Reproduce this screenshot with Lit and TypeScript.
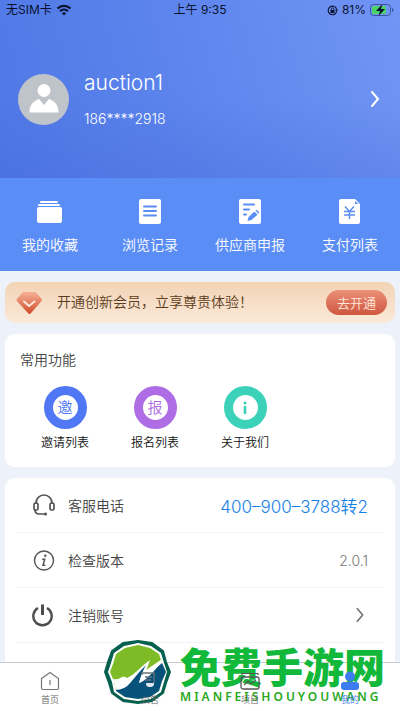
import { LitElement, html, svg, css } from "lit";
import { customElement } from "lit/decorators.js";

const quick = [
  {
    label: "我的收藏",
    icon: svg`<rect x="4" y="4" width="18" height="2" rx="1" fill="#fff"/><rect x="2" y="7" width="22" height="2" rx="1" fill="#fff"/><rect x="1" y="10" width="25" height="16" rx="2" fill="#fff"/>`,
  },
  {
    label: "浏览记录",
    icon: svg`<rect x="3" y="2" width="22" height="25" rx="2" fill="#fff"/><path d="M8 9.500H20M8 14H20M8 18.500H20" stroke="#5b8df6" stroke-width="2" stroke-linecap="round"/>`,
  },
  {
    label: "供应商申报",
    icon: svg`<rect x="3" y="2" width="22" height="25" rx="2" fill="#fff"/><path d="M8 7.500H18M8 12.500H13M8 17.500H10" stroke="#5b8df6" stroke-width="2" stroke-linecap="round"/><path d="M11.500 24L12.500 20L18.500 14.500L21.500 17.800L15.500 23Z" fill="#5b8df6"/><path d="M19.500 13.600L20.700 12.800L23.300 15.600L22.400 16.800Z" fill="#5b8df6"/>`,
  },
  {
    label: "支付列表",
    icon: svg`<path d="M5 2H19L24 7V25a2 2 0 0 1-2 2H5a2 2 0 0 1-2-2V4a2 2 0 0 1 2-2Z" fill="#fff"/><path d="M19 4V7H22.500Z" fill="#5b8df6"/><path d="M9 9.500L13.500 14.500L18 9.500M8 14.500H19M8 18H19M13.500 14.500V22" fill="none" stroke="#5b8df6" stroke-width="1.500"/>`,
  },
];

const headset = svg`<g fill="none" stroke="#555" stroke-width="1.700"><path d="M4 11V10a8 8 0 0 1 16 0v1"/><rect x="2" y="10" width="4" height="7" rx="1.500"/><rect x="18" y="10" width="4" height="7" rx="1.500"/><path d="M3 16.500c0 3 1.500 4.500 4 4.500H12"/></g><circle cx="13.500" cy="21" r="1.600" fill="#555"/>`;
const info = svg`<circle cx="12" cy="12.500" r="9.500" fill="none" stroke="#555" stroke-width="1.400"/><circle cx="13.300" cy="7.800" r="1.200" fill="#555"/><path d="M10.200 11.200H12.700L11 17.300H13.300" fill="none" stroke="#555" stroke-width="1.500"/>`;
const power = svg`<path d="M6 5a9.200 9.200 0 1 0 9 0" fill="none" stroke="#4d4d4d" stroke-width="2.400"/><path d="M10.500 1.500V12" stroke="#4d4d4d" stroke-width="3"/>`;
const phone = svg`<path d="M6 22V9a3 3 0 0 1 5 0" fill="none" stroke="#4d4d4d" stroke-width="2"/>`;

const tabs = [
  {
    label: "首页",
    icon: svg`<path d="M1.500 7.500L10 1.500L18.500 7.500V17a1.500 1.500 0 0 1-1.500 1.500H3A1.500 1.500 0 0 1 1.500 17ZM10 9V14" fill="none" stroke="#777" stroke-width="1.200"/>`,
  },
  {
    label: "公告",
    icon: svg`<path d="M2 4V2H14V12M5 6H12M5 9H11" fill="none" stroke="#69717a" stroke-width="1.300"/><path d="M6 12H14c0 3-1 4-4 4s-4-1-4-4Z" fill="#dfe8ee"/>`,
  },
  {
    label: "项目",
    icon: svg`<rect x="1" y="6" width="18" height="12" rx="2" fill="none" stroke="#555" stroke-width="1.300"/><path d="M2 4V2.500H18V4M4 14L8 10L11 13L16 9" fill="none" stroke="#555" stroke-width="1.200"/>`,
  },
  {
    label: "我的",
    active: true,
    icon: svg`<circle cx="10" cy="5.500" r="5" fill="#3c7cf0"/><rect x="1" y="11" width="18" height="8" rx="3" fill="#3c7cf0"/>`,
  },
];

@customElement("app-root")
export class AppRoot extends LitElement {
  static styles = css`
    :host {
      display: flex;
      flex-direction: column;
      height: 100vh;
      background: #edf2fa;
      font-family: Inter, "Noto Sans CJK SC", sans-serif;
      font-weight: 350;
      color: #333;
      overflow: hidden;
    }
    * { box-sizing: border-box; }
    svg { display: block; flex: none; }
    button {
      border: 0;
      padding: 0;
      margin: 0;
      background: none;
      font: inherit;
      color: inherit;
    }
    a { color: inherit; text-decoration: none; }
    .hero {
      flex: none;
      background:
        linear-gradient(180deg, rgba(64, 98, 210, 0) 55%, rgba(64, 98, 210, 0.25) 100%),
        linear-gradient(75deg, #4f78e6 0%, #5c84ec 45%, #7195f5 100%);
    }
    .status {
      display: grid;
      grid-template-columns: 1fr auto 1fr;
      align-items: center;
      height: 20px;
      padding: 0 6px;
      font-size: 12px;
      line-height: 20px;
      font-weight: 400;
      color: #0b1230;
    }
    .status-side { display: flex; align-items: center; gap: 4px; }
    .end { justify-content: flex-end; }
    .profile {
      display: flex;
      align-items: center;
      width: 100%;
      height: 158px;
      padding: 0 16px 0 18px;
      gap: 15px;
      text-align: left;
      color: #fff;
    }
    .who { flex: 1; display: flex; flex-direction: column; gap: 12px; font-weight: 300; }
    .name { font-size: 21px; line-height: 28px; }
    .tel { font-size: 14px; line-height: 20px; }
    .quick {
      flex: none;
      display: grid;
      grid-template-columns: repeat(4, 1fr);
      background: #5b8df6;
      color: #fff;
      height: 93px;
    }
    .quick button {
      display: flex;
      flex-direction: column;
      align-items: center;
      padding-top: 19px;
      gap: 8px;
      font-size: 14px;
      line-height: 24px;
    }
    .scroll {
      flex: 1;
      min-height: 0;
      overflow: hidden;
      padding: 11px 5px 0;
      display: flex;
      flex-direction: column;
      gap: 11px;
    }
    .banner {
      flex: none;
      display: flex;
      align-items: center;
      height: 41px;
      padding: 0 8px 0 10px;
      border-radius: 10px;
      background: linear-gradient(180deg, #f3d3b4, #fbe9da);
      color: #5a3b20;
      font-size: 14px;
      line-height: 24px;
    }
    .banner-text { flex: 1; padding: 0 0 2px 4px; }
    .open {
      width: 61px;
      height: 25px;
      border-radius: 13px;
      background: linear-gradient(180deg, #ec9079, #cf5640);
      color: #ffeada;
      font-size: 13px;
      line-height: 24px;
      white-space: nowrap;
    }
    .card { flex: none; background: #fff; border-radius: 10px; }
    .common { height: 133px; padding: 14px 15px 0; }
    .title { margin: 0; font-size: 14px; line-height: 24px; font-weight: 350; color: #444; }
    .apps { display: flex; padding-top: 14px; }
    .app {
      width: 90px;
      display: flex;
      flex-direction: column;
      align-items: center;
      gap: 3px;
      font-size: 12px;
      line-height: 21px;
      color: #111;
    }
    .disc {
      display: grid;
      place-items: center;
      width: 43px;
      height: 43px;
      border: 9px solid currentColor;
      border-radius: 50%;
      font-size: 15px;
      line-height: 24px;
    }
    .blue { color: #5078f5; }
    .purple { color: #ae6ce5; }
    .teal { color: #3bd2b9; }
    .list { padding: 0 11px; }
    .row {
      display: flex;
      align-items: center;
      width: 100%;
      height: 55px;
      padding: 0 16px;
      gap: 12px;
      border-bottom: 1px solid #f2f3f5;
      font-size: 14px;
      text-align: left;
      color: #444;
    }
    .label { flex: 1; }
    .call { font-size: 17px; color: #1681e8; }
    .version { font-size: 14px; font-weight: 300; color: #777; }
    .tabbar {
      flex: none;
      position: relative;
      display: grid;
      grid-template-columns: repeat(4, 1fr);
      height: 49px;
      border-top: 1px solid #c9cbd2;
      background: #fff;
    }
    .tab {
      position: relative;
      display: flex;
      flex-direction: column;
      align-items: center;
      padding-top: 8px;
      gap: 2px;
      font-size: 9px;
      line-height: 14px;
      color: #666;
    }
    .active { color: #3c7cf0; }
    .mark {
      position: absolute;
      left: 104px;
      bottom: 7px;
      display: flex;
      align-items: flex-end;
      gap: 9px;
      pointer-events: none;
    }
    .mark-text { display: flex; flex-direction: column; color: #12b83a; white-space: nowrap; }
    .mark-cn {
      font-family: "Noto Sans CJK SC", sans-serif;
      font-size: 41px;
      line-height: 50px;
      font-weight: 900;
    }
    .mark-en {
      font-family: "Noto Sans", sans-serif;
      font-size: 12px;
      line-height: 14px;
      font-weight: 600;
      letter-spacing: 3px;
      color: #28a822;
    }
  `;

  private chevron(color: string, size: number, stroke: number) {
    return html`<svg width=${size} height=${size} viewBox="0 0 18 18" aria-hidden="true">
      <path d="M6 2L12 9L6 16" fill="none" stroke=${color} stroke-width=${stroke} stroke-linecap="round" stroke-linejoin="round" />
    </svg>`;
  }

  private rowIcon(icon: unknown) {
    return html`<svg width="24" height="24" viewBox="0 0 24 24" aria-hidden="true">${icon}</svg>`;
  }

  render() {
    return html`
      <header class="hero">
        <div class="status">
          <div class="status-side">
            <span>无SIM卡</span>
            <svg width="16" height="12" viewBox="0 0 16 12">
              <path d="M1.500 4.500a9.500 9.500 0 0 1 13 0M4 7.200a6 6 0 0 1 8 0" fill="none" stroke="#0b1230" stroke-width="2.200" />
              <path d="M5.800 9.300a3.300 3.300 0 0 1 4.400 0L8 11.500Z" fill="#0b1230" />
            </svg>
          </div>
          <span>上午 9:35</span>
          <div class="status-side end">
            <svg width="11" height="11" viewBox="0 0 11 11">
              <path d="M9.500 7a4.300 4.300 0 1 1 .2-2.500" fill="none" stroke="#0b1230" stroke-width="1.100" />
              <path d="M8 4.500h3l-1.500 2.500Z" fill="#0b1230" />
              <rect x="3.500" y="5" width="4" height="3" fill="#0b1230" />
              <path d="M4.300 5V4a1.200 1.200 0 0 1 2.400 0v1" fill="none" stroke="#0b1230" stroke-width=".8" />
            </svg>
            <span>81%</span>
            <svg width="24" height="12" viewBox="0 0 24 12">
              <rect x=".5" y=".5" width="20" height="11" rx="3" fill="none" stroke="#3c559f" />
              <rect x="2" y="2" width="14" height="8" rx="1.500" fill="#4bd264" />
              <path d="M22 4v4c1-.4 1.400-1 1.400-2S23 4.400 22 4Z" fill="#3c559f" />
              <path d="M12.500 0L6 7h4L8.500 12L15 5h-4Z" fill="#0b1230" />
            </svg>
          </div>
        </div>
        <button class="profile">
          <svg width="51" height="51" viewBox="0 0 51 51" aria-hidden="true">
            <circle cx="25.500" cy="25.500" r="25.500" fill="#bfc3ca" />
            <circle cx="26" cy="16.500" r="6.500" fill="#fff" />
            <path d="M11.500 38.500c0-7 3-11 9.500-13.500l5 6l5-6c6.500 2.500 9.500 6.500 9.500 13.500Z" fill="#fff" />
          </svg>
          <span class="who"><span class="name">auction1</span><span class="tel">186****2918</span></span>
          ${this.chevron("#fff", 18, 2)}
        </button>
      </header>

      <nav class="quick">
        ${quick.map(
          (q) => html`<button>
            <svg width="28" height="28" viewBox="0 0 28 28" aria-hidden="true">${q.icon}</svg>
            <span>${q.label}</span>
          </button>`
        )}
      </nav>

      <main class="scroll">
        <section class="banner">
          <svg width="38" height="30" viewBox="0 0 38 30" aria-hidden="true">
            <defs>
              <linearGradient id="gem" x1="0" y1="0" x2="0" y2="1">
                <stop offset="0" stop-color="#f4ab92" />
                <stop offset="1" stop-color="#d2512f" />
              </linearGradient>
            </defs>
            <path d="M8.500 5.500H20L25.500 12L14.500 24.500L3 12Z" fill="url(#gem)" stroke="url(#gem)" stroke-width="3" stroke-linejoin="round" />
            <path d="M9 13.500L14 18L19.500 13.500" fill="none" stroke="#ffe9dc" stroke-width="2" stroke-linecap="round" />
          </svg>
          <span class="banner-text">开通创新会员，立享尊贵体验！</span>
          <button class="open">去开通</button>
        </section>

        <section class="card common">
          <h2 class="title">常用功能</h2>
          <div class="apps">
            <button class="app"><span class="disc blue">邀</span>邀请列表</button>
            <button class="app"><span class="disc purple">报</span>报名列表</button>
            <button class="app">
              <span class="disc teal">
                <svg width="6" height="14" viewBox="0 0 6 14" aria-hidden="true">
                  <circle cx="3" cy="2" r="1.500" fill="currentColor" />
                  <path d="M3 6V12" stroke="currentColor" stroke-width="2.600" stroke-linecap="round" />
                </svg>
              </span>关于我们
            </button>
          </div>
        </section>

        <section class="card list">
          <div class="row">
            ${this.rowIcon(headset)}<span class="label">客服电话</span>
            <a class="call" href="tel:4009003788">400–900–3788转2</a>
          </div>
          <div class="row">${this.rowIcon(info)}<span class="label">检查版本</span><span class="version">2.0.1</span></div>
          <button class="row">${this.rowIcon(power)}<span class="label">注销账号</span>${this.chevron("#777", 16, 2)}</button>
          <div class="row">${this.rowIcon(phone)}</div>
        </section>
      </main>

      <nav class="tabbar">
        <div class="mark">
          <svg width="67" height="64" viewBox="0 0 67 64" aria-hidden="true">
            <defs>
              <clipPath id="seal">
                <path d="M21 8L34 5L46 8L55 14L58 23L62 32L58 41L55 51L46 57L34 59L21 57L12 51L10 41L6 32L9 24L12 14Z" />
              </clipPath>
            </defs>
            <path d="M19 3L34 1L48 3L59 11L62 22L66 32L62 43L59 53L48 61L34 63L19 61L8 53L5 43L1 32L4 22L8 11Z" fill="#06604e" stroke="#06604e" stroke-width="2" stroke-linejoin="round" />
            <path d="M20 6L34 3L47 6L57 13L60 23L63 32L60 42L57 52L47 59L34 61L20 59L10 52L8 42L4 32L7 23L10 13Z" fill="#fff" />
            <g clip-path="url(#seal)">
              <path d="M0 0H67V64H0Z" fill="#7dbb27" />
              <path d="M5 42L10 39Q14 40 16 38Q20 35 23 38Q28 36 33 31Q39 25 46 20L42 30Q48 26 58 19L67 20V64H5Z" fill="#fff" />
              <path d="M11 50Q21 50 27 42Q34 33 42 25Q38 32 35 43Q43 36 58 23L67 20V64H11Z" fill="#07527a" />
              <path d="M35 43Q38 32 43 25L45 23Q41 33 39 38Q48 30 58 20Q53 29 44 37Q39 42 35 43Z" fill="#fff" />
            </g>
          </svg>
          <div class="mark-text"><span class="mark-cn">免费手游网</span><span class="mark-en">MIANFEISHOUYOUWANG</span></div>
        </div>
        ${tabs.map(
          (t) => html`<button class="tab ${t.active ? "active" : ""}">
            <svg width="20" height="20" viewBox="0 0 20 20" aria-hidden="true">${t.icon}</svg>
            <span>${t.label}</span>
          </button>`
        )}
      </nav>
    `;
  }
}
